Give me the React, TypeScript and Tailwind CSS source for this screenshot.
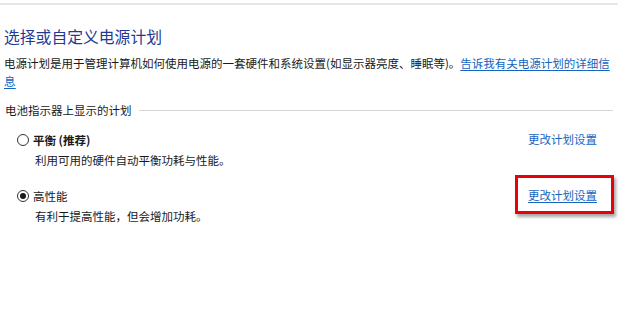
import React from 'react';

type PlanProps = {
  name: React.ReactNode;
  description: string;
  selected?: boolean;
  highlight?: boolean;
  className?: string;
};

const Radio: React.FC<{ checked?: boolean }> = ({ checked }) => (
  <span className="flex h-[12px] w-[12px] shrink-0 items-center justify-center rounded-full border border-[#333333] bg-white">
    {checked && <span className="h-[6px] w-[6px] rounded-full bg-[#1a1a1a]" />}
  </span>
);

const PlanRow: React.FC<PlanProps> = ({ name, description, selected, highlight, className }) => (
  <div className={className}>
    <div className="flex h-[18px] items-center justify-between pl-[17px] pr-[23px] text-[11.5px] leading-[18px]">
      <label className="flex items-center gap-[4px] text-[#1a1a1a]">
        <Radio checked={selected} />
        <span>{name}</span>
      </label>
      <div className="relative -mt-[3px] flex">
        <a
          href="#"
          className={
            highlight
              ? 'block text-[#1565c0] underline underline-offset-2'
              : 'block text-[#1565c0] no-underline'
          }
        >
          更改计划设置
        </a>
        {highlight && (
          <span className="pointer-events-none absolute left-[-13px] top-[-11px] h-[39px] w-[99px] border-[3px] border-[#e8000b] shadow-[2px_3px_3px_rgba(0,0,0,0.35)]" />
        )}
      </div>
    </div>
    <p className="mt-[2px] pl-[35px] text-[11.5px] leading-[18px] text-[#1a1a1a]">{description}</p>
  </div>
);

export default function App() {
  return (
    <div className="h-[309px] w-[620px] overflow-hidden bg-white font-['Noto_Sans_CJK_SC','Microsoft_YaHei',sans-serif]">
      <div className="mr-[2px] mt-[3px] h-[2px] bg-[#e6e6e6]" />
      <div className="pl-[4px]">
        <h1 className="mt-[21px] text-[15.8px] leading-[22px] text-[#1f3a93]">选择或自定义电源计划</h1>
        <div className="mt-[6px] text-[11.5px] leading-[18px] text-[#1a1a1a]">
          <p className="whitespace-nowrap">
            电源计划是用于管理计算机如何使用电源的一套硬件和系统设置(如显示器亮度、睡眠等)。
            <a href="#" className="text-[#1565c0] underline underline-offset-2">
              告诉我有关电源计划的详细信
            </a>
          </p>
          <p className="h-[18px] text-[#1565c0] underline underline-offset-2">
            <a href="#">息</a>
          </p>
        </div>
        <div className="mt-[11px] flex items-center gap-[7px] pr-[7px]">
          <span className="pl-[1px] text-[11.5px] leading-[18px] text-[#1a1a1a]">电池指示器上显示的计划</span>
          <span className="h-px flex-1 bg-[#d4d4d4]" />
        </div>
      </div>
      <PlanRow
        className="mt-[12px]"
        name={<span className="font-bold">平衡 (推荐)</span>}
        description="利用可用的硬件自动平衡功耗与性能。"
      />
      <PlanRow
        className="mt-[18px]"
        name="高性能"
        description="有利于提高性能，但会增加功耗。"
        selected
        highlight
      />
    </div>
  );
}
